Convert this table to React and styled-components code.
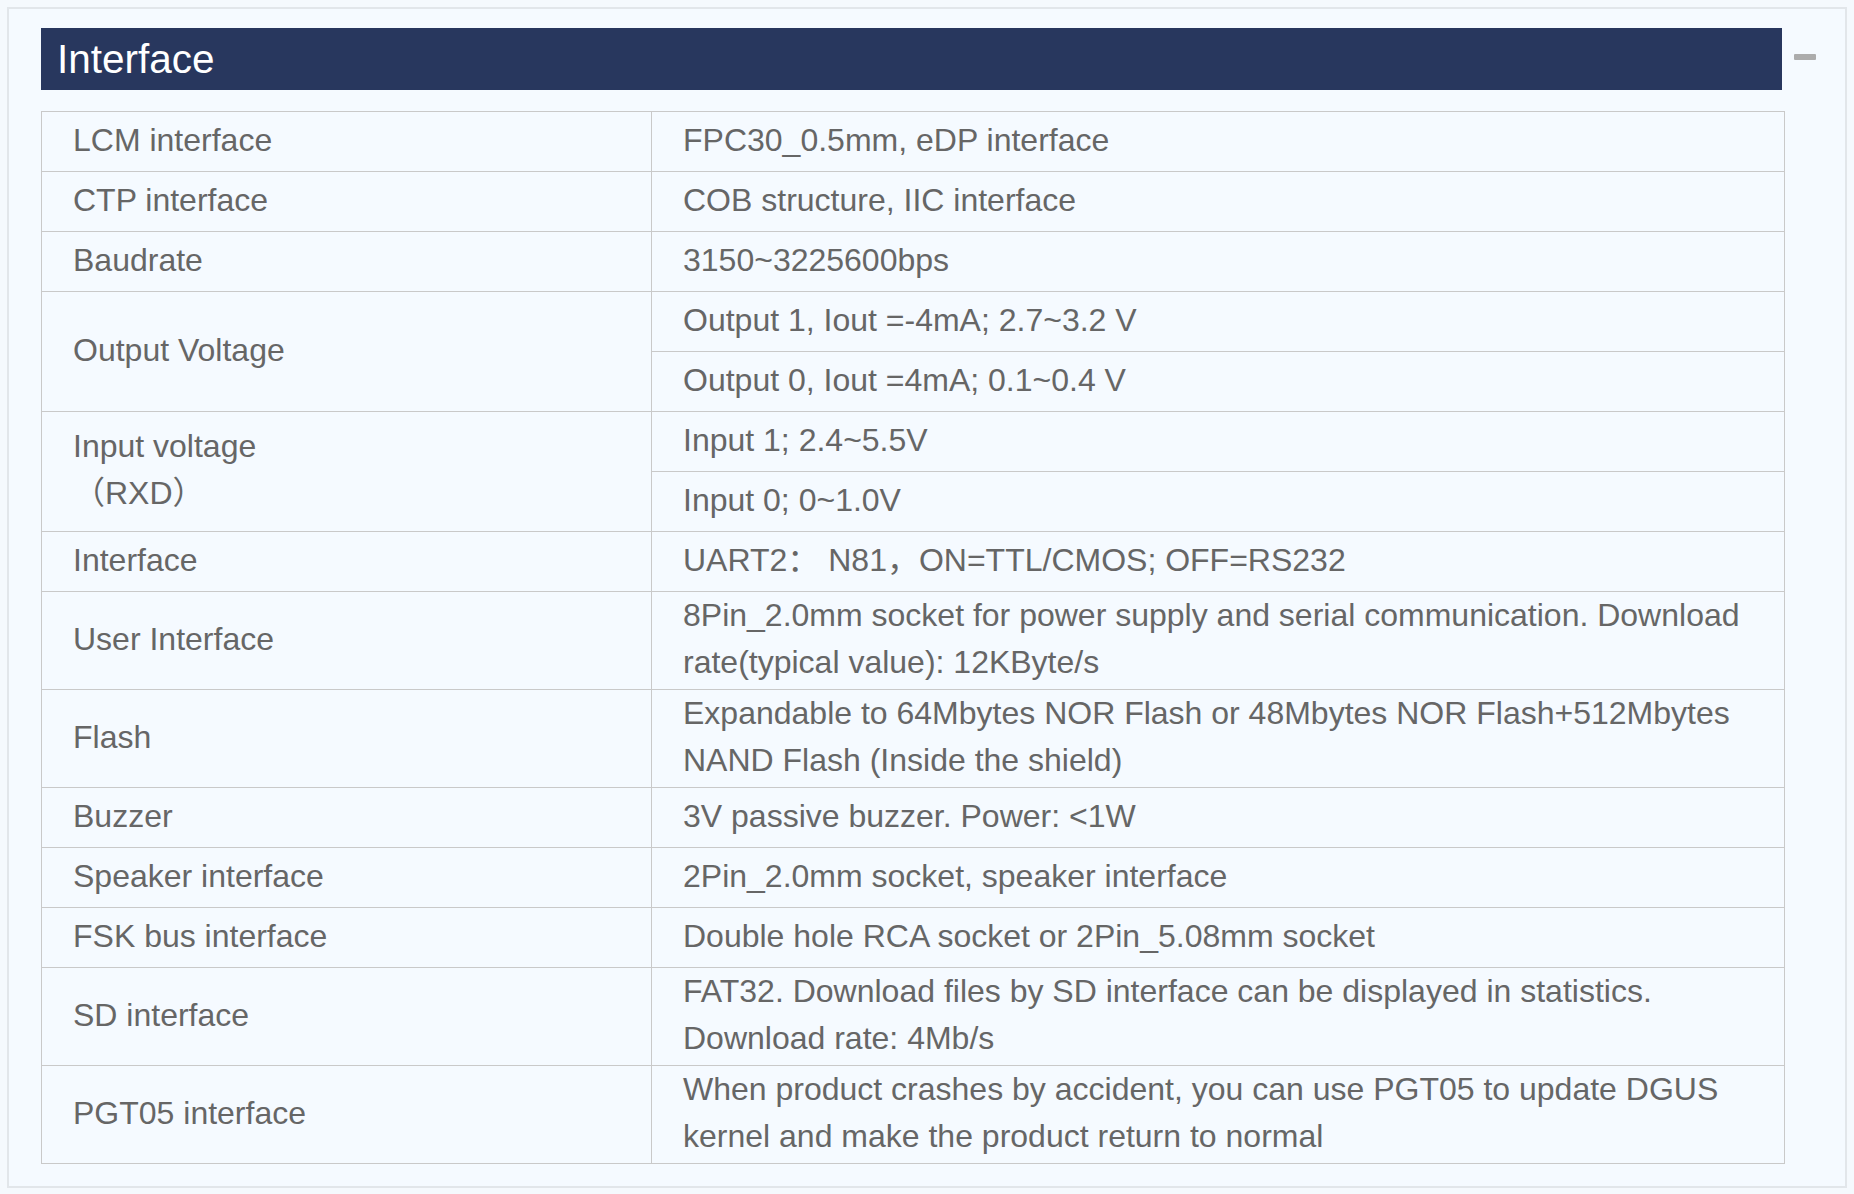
import React from "react";
import styled, { createGlobalStyle } from "styled-components";

const Global = createGlobalStyle`
  html, body {
    margin: 0;
    padding: 0;
    background: #f5f9fd;
  }
  body {
    font-family: "Liberation Sans", Arial, "Noto Sans CJK SC", sans-serif;
  }
`;

const Page = styled.div`
  padding: 7px;
`;

const Panel = styled.section`
  border: 2px solid #e2e6ea;
  background: #f5faff;
  padding: 19px 60px 22px 32px;
`;

const HeaderRow = styled.div`
  display: grid;
  grid-template-columns: 1fr 63px;
  margin-right: -60px;
  margin-bottom: 21px;
`;

const TitleBar = styled.h2`
  margin: 0;
  height: 62px;
  display: flex;
  align-items: center;
  padding-left: 16px;
  background: #28375e;
  color: #ffffff;
  font-family: "Liberation Sans", Arial, sans-serif;
  font-weight: 400;
  font-size: 40.5px;
`;

const Toggle = styled.button`
  display: flex;
  align-items: center;
  justify-content: flex-start;
  padding: 0 0 4px 12px;
  border: 0;
  background: transparent;
  cursor: pointer;
`;

const MinusBar = styled.span`
  display: block;
  width: 22px;
  height: 6px;
  border-radius: 1px;
  background: #acacac;
`;

const Grid = styled.div`
  display: grid;
  grid-template-columns: 609px 1fr;
  grid-auto-rows: minmax(59px, auto);
  gap: 1px;
  padding: 1px;
  background: #c9c9c9;
`;

const Cell = styled.div`
  display: flex;
  align-items: center;
  background: #f5faff;
  padding: 0 28px 3px 31px;
  color: #666666;
  font-size: 32px;
  line-height: 47px;
  font-family: "Liberation Sans", Arial, "Noto Sans CJK SC", sans-serif;
  grid-row: ${(p) => (p.$span ? `span ${p.$span}` : "auto")};
`;

const rows = [
  { label: "LCM interface", values: ["FPC30_0.5mm, eDP interface"] },
  { label: "CTP interface", values: ["COB structure, IIC interface"] },
  { label: "Baudrate", values: ["3150~3225600bps"] },
  {
    label: "Output Voltage",
    values: ["Output 1, Iout =-4mA; 2.7~3.2 V", "Output 0, Iout =4mA; 0.1~0.4 V"],
  },
  {
    label: (
      <span>
        Input voltage
        <br />
        （RXD）
      </span>
    ),
    values: ["Input 1; 2.4~5.5V", "Input 0; 0~1.0V"],
  },
  { label: "Interface", values: ["UART2： N81，ON=TTL/CMOS; OFF=RS232"] },
  {
    label: "User Interface",
    values: [
      "8Pin_2.0mm socket for power supply and serial communication. Download rate(typical value): 12KByte/s",
    ],
  },
  {
    label: "Flash",
    values: [
      "Expandable to 64Mbytes NOR Flash or 48Mbytes NOR Flash+512Mbytes NAND Flash (Inside the shield)",
    ],
  },
  { label: "Buzzer", values: ["3V passive buzzer. Power: <1W"] },
  { label: "Speaker interface", values: ["2Pin_2.0mm socket, speaker interface"] },
  { label: "FSK bus interface", values: ["Double hole RCA socket or 2Pin_5.08mm socket"] },
  {
    label: "SD interface",
    values: [
      "FAT32. Download files by SD interface can be displayed in statistics. Download rate: 4Mb/s",
    ],
  },
  {
    label: "PGT05 interface",
    values: [
      "When product crashes by accident, you can use PGT05 to update DGUS kernel and make the product return to normal",
    ],
  },
];

export default function App() {
  return (
    <>
      <Global />
      <Page>
        <Panel>
          <HeaderRow>
            <TitleBar>Interface</TitleBar>
            <Toggle aria-label="collapse">
              <MinusBar />
            </Toggle>
          </HeaderRow>
          <Grid>
            {rows.map((r, i) => (
              <React.Fragment key={i}>
                <Cell $span={r.values.length > 1 ? r.values.length : 0}>{r.label}</Cell>
                {r.values.map((v, j) => (
                  <Cell key={j}>{v}</Cell>
                ))}
              </React.Fragment>
            ))}
          </Grid>
        </Panel>
      </Page>
    </>
  );
}
